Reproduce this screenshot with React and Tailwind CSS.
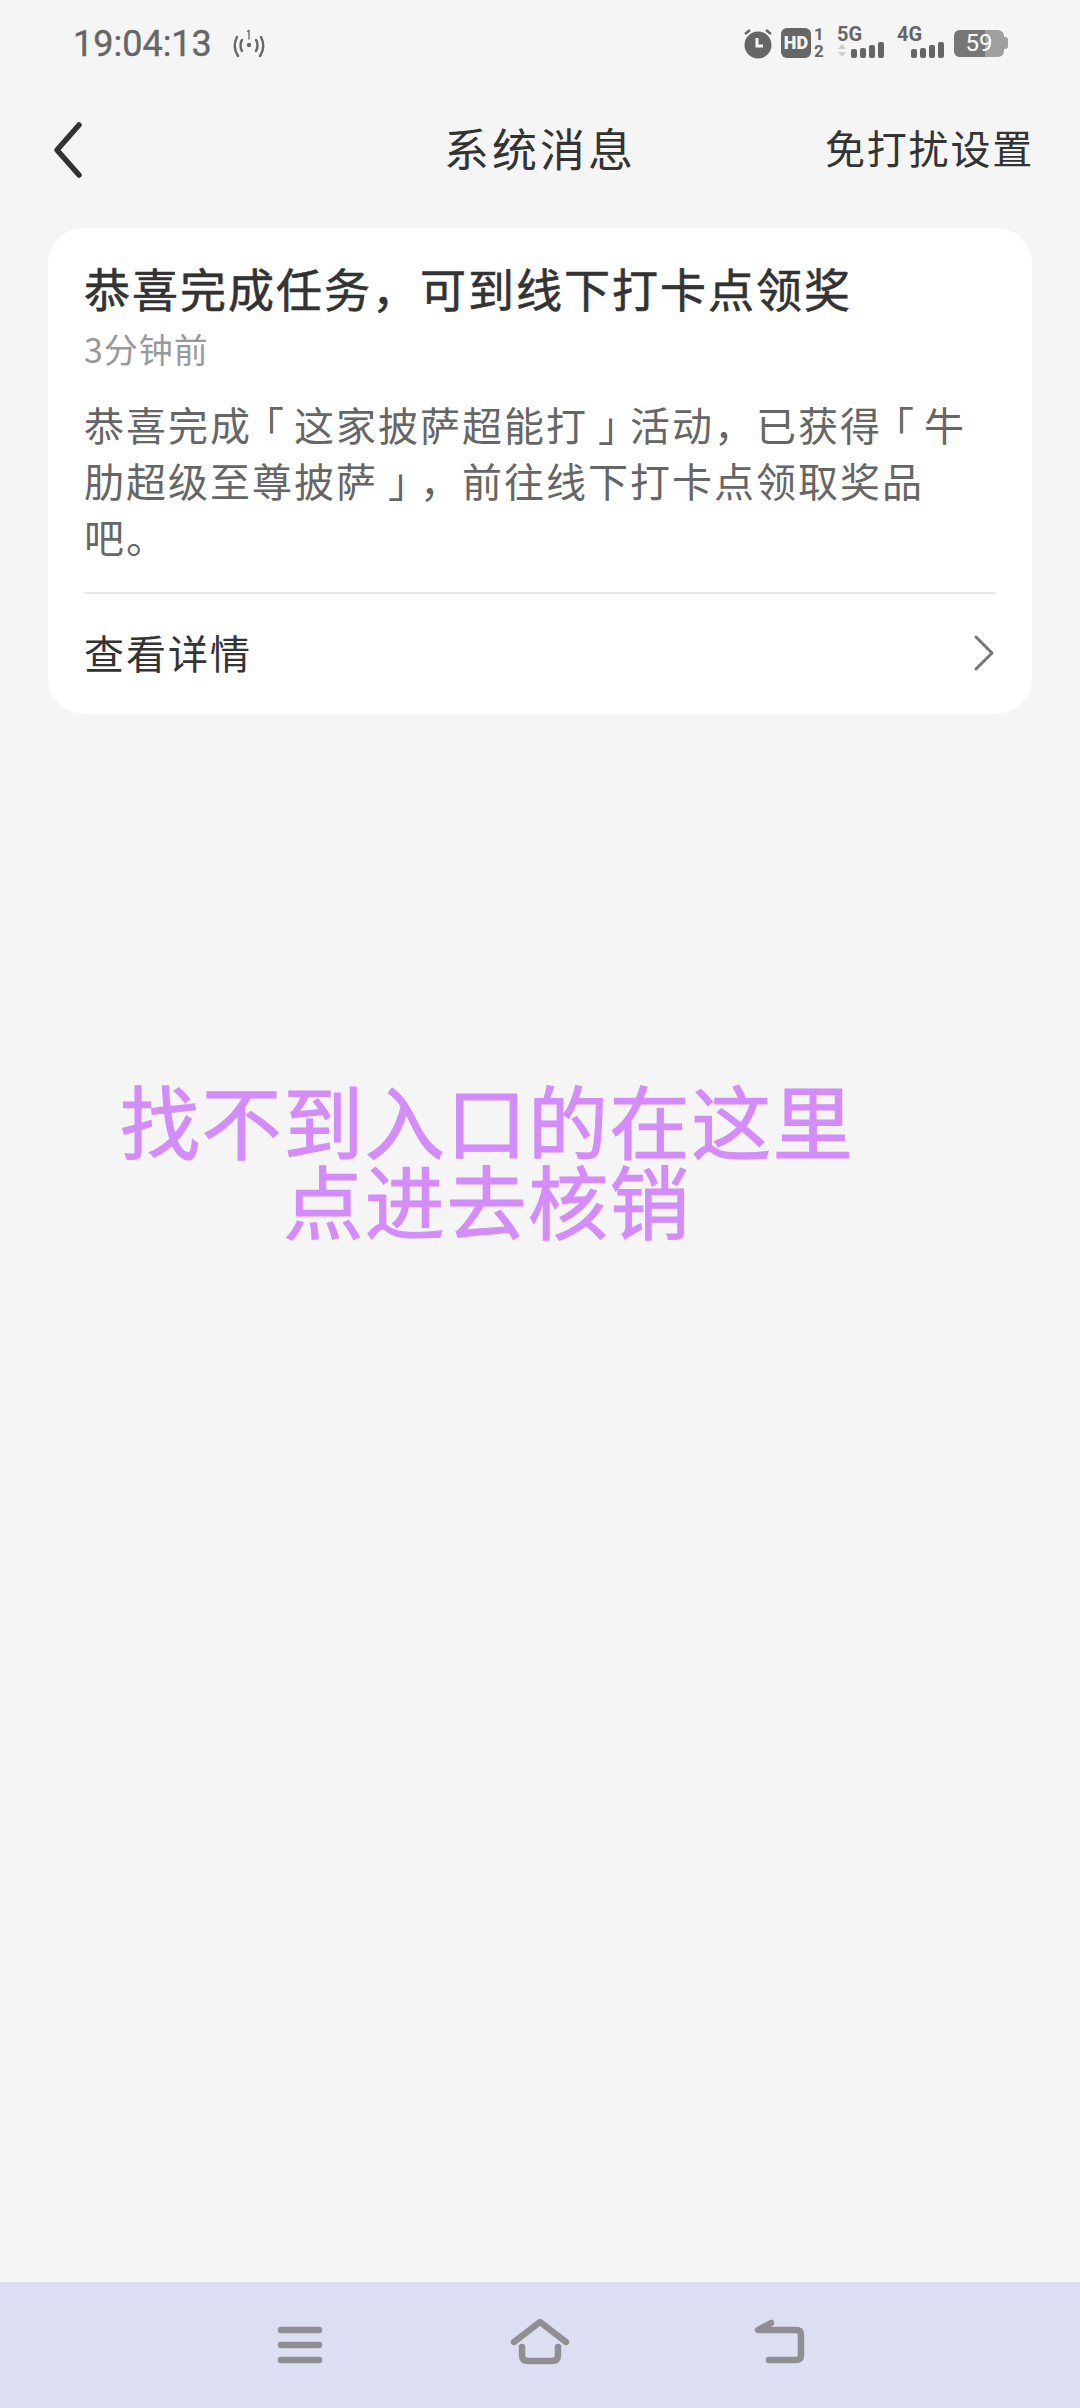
import React from "react";

const cjk = { fontFamily: '"Noto Sans CJK SC", "Noto Sans", sans-serif' };

function Bars() {
  return (
    <div className="flex items-end gap-[3px]">
      <div className="w-[6px] h-[9px] rounded-[2px] bg-[#666]" />
      <div className="w-[6px] h-[10px] rounded-[2px] bg-[#666]" />
      <div className="w-[6px] h-[13px] rounded-[2px] bg-[#666]" />
      <div className="w-[6px] h-[16px] rounded-[2px] bg-[#666]" />
    </div>
  );
}

function StatusBar() {
  return (
    <div className="h-[86px] flex items-center pl-[73px] pr-[72px] text-[#666]">
      <span className="pt-[2px] text-[36px] font-normal leading-none [-webkit-text-stroke:0.4px_#666]" style={{ fontFamily: "Roboto, sans-serif" }}>19:04:13</span>
      <svg className="ml-[21px]" width="32" height="30" viewBox="0 0 32 30" fill="none" stroke="#666" strokeWidth="2.4" strokeLinecap="round">
        <path d="M9 12c-2 3-2 8 0 11" />
        <path d="M4 9c-3 6-3 13 1 19" />
        <path d="M23 12c2 3 2 8 0 11" />
        <path d="M28 9c3 6 3 13-1 19" />
        <circle cx="16" cy="17" r="2.2" fill="#666" stroke="none" />
        <path d="M14.5 3.5 16 2.5V11" strokeWidth="1.3" />
      </svg>
      <div className="ml-auto flex items-center" style={{ fontFamily: "Roboto, sans-serif" }}>
        <svg width="30" height="32" viewBox="0 0 30 32">
          <circle cx="15" cy="18" r="13.5" fill="#666" />
          <path d="M14 11v8h6" fill="none" stroke="#f5f5f5" strokeWidth="3" />
          <path d="M2 7l5-4M28 7l-5-4" stroke="#666" strokeWidth="2.5" />
        </svg>
        <div className="ml-[8px] w-[30px] h-[30px] rounded-[6px] bg-[#666] flex items-center justify-center text-[18px] font-black text-[#f5f5f5] leading-none">HD</div>
        <div className="ml-[2px] flex flex-col items-center justify-between h-[30px] w-[12px] text-[17px] font-bold leading-[13px]">
          <span>1</span>
          <span>2</span>
        </div>
        <div className="ml-[12px] flex flex-col w-[47px] h-[32px]">
          <span className="text-[20px] font-bold leading-[15px]">5G</span>
          <div className="flex items-end justify-between">
            <svg width="10" height="15" viewBox="0 0 10 15" fill="#ccc">
              <path d="M5 1l4 5H1zM5 14l4-5H1z" />
            </svg>
            <Bars />
          </div>
        </div>
        <div className="ml-[13px] flex flex-col w-[47px] h-[32px]">
          <span className="text-[20px] font-bold leading-[15px]">4G</span>
          <div className="flex justify-end">
            <Bars />
          </div>
        </div>
        <div className="ml-[10px] flex items-center">
          <div className="relative w-[50px] h-[27px] rounded-[6px] overflow-hidden bg-[#a0a0a0] flex items-center justify-center">
            <div className="absolute left-0 top-0 bottom-0 w-[31px] bg-[#777]" />
            <span className="relative text-[24px] text-white leading-none">59</span>
          </div>
          <div className="w-[4px] h-[12px] rounded-r-[3px] bg-[#a0a0a0]" />
        </div>
      </div>
    </div>
  );
}

function NavBar() {
  return (
    <div className="relative h-[124px] flex items-center justify-between pl-[52px] pr-[46px] text-[#333]">
      <svg className="mt-[4px]" width="32" height="58" viewBox="0 0 32 58" fill="none" stroke="#333" strokeWidth="5.5" strokeLinecap="round" strokeLinejoin="round">
        <path d="M27 4 5 29l22 25" />
      </svg>
      <span className="absolute left-0 right-0 pb-[2px] text-center text-[45px] tracking-[3px] leading-none">系统消息</span>
      <span className="pb-[2px] text-[40px] tracking-[1.8px] leading-none">免打扰设置</span>
    </div>
  );
}

function MessageCard() {
  return (
    <div className="mx-[48px] mt-[18px] h-[486px] rounded-[36px] bg-white pl-[36px] pr-[37px] [text-spacing-trim:space-all]">
      <div className="pt-[34px] text-[46px] tracking-[2px] leading-[50px] text-[#333] [-webkit-text-stroke:0.6px_#333]">恭喜完成任务，可到线下打卡点领奖</div>
      <div className="mt-[17px] text-[34px] tracking-[1px] leading-[40px] text-[#999]">3分钟前</div>
      <div className="mt-[27px] text-[40px] tracking-[2px] leading-[56px] text-[#666]">
        恭喜完成<span className="inline-block -translate-x-[8px]">「</span>这家披萨超能打<span className="inline-block translate-x-[10px]">」</span>活动，已获得<span className="inline-block -translate-x-[8px]">「</span>牛肋超级至尊披萨<span className="inline-block translate-x-[10px]">」</span>，前往线下打卡点领取奖品吧。
      </div>
      <div className="mt-[28px] h-[2px] bg-[#e8e8e8]" />
      <div className="flex items-center justify-between h-[116px]">
        <span className="text-[40px] tracking-[2px] leading-none text-[#333]">查看详情</span>
        <svg className="mt-[2px]" width="22" height="38" viewBox="0 0 22 38" fill="none" stroke="#777" strokeWidth="3" strokeLinecap="round" strokeLinejoin="round">
          <path d="M3 3l16 16L3 35" />
        </svg>
      </div>
    </div>
  );
}

function BottomBar() {
  return (
    <div className="mt-auto h-[126px] bg-[#dcdff2]">
      <svg className="block" width="1080" height="126" viewBox="0 2282 1080 126" fill="none" stroke="#8e8e93" strokeWidth="6.5" strokeLinecap="round" strokeLinejoin="round">
        <path d="M281 2330h38M281 2345h38M281 2360h38" />
        <path d="M514 2342 540 2322l26 20" />
        <path d="M522 2347v8q0 6 6 6h24q6 0 6-6v-8" />
        <path d="M771 2323l-13 7h38q5 0 5 5v20q0 5-5 5h-27" />
      </svg>
    </div>
  );
}

export default function App() {
  return (
    <div className="w-[1080px] h-[2408px] flex flex-col bg-[#f5f5f5] overflow-hidden" style={cjk}>
      <StatusBar />
      <NavBar />
      <MessageCard />
      <div className="mt-[364px] ml-[120px] w-fit text-center text-[80px] leading-[80px] tracking-[1.6px] text-[#d58cfb] [-webkit-text-stroke:1.2px_#d58cfb]">
        找不到入口的在这里
        <br />
        点进去核销
      </div>
      <BottomBar />
    </div>
  );
}
